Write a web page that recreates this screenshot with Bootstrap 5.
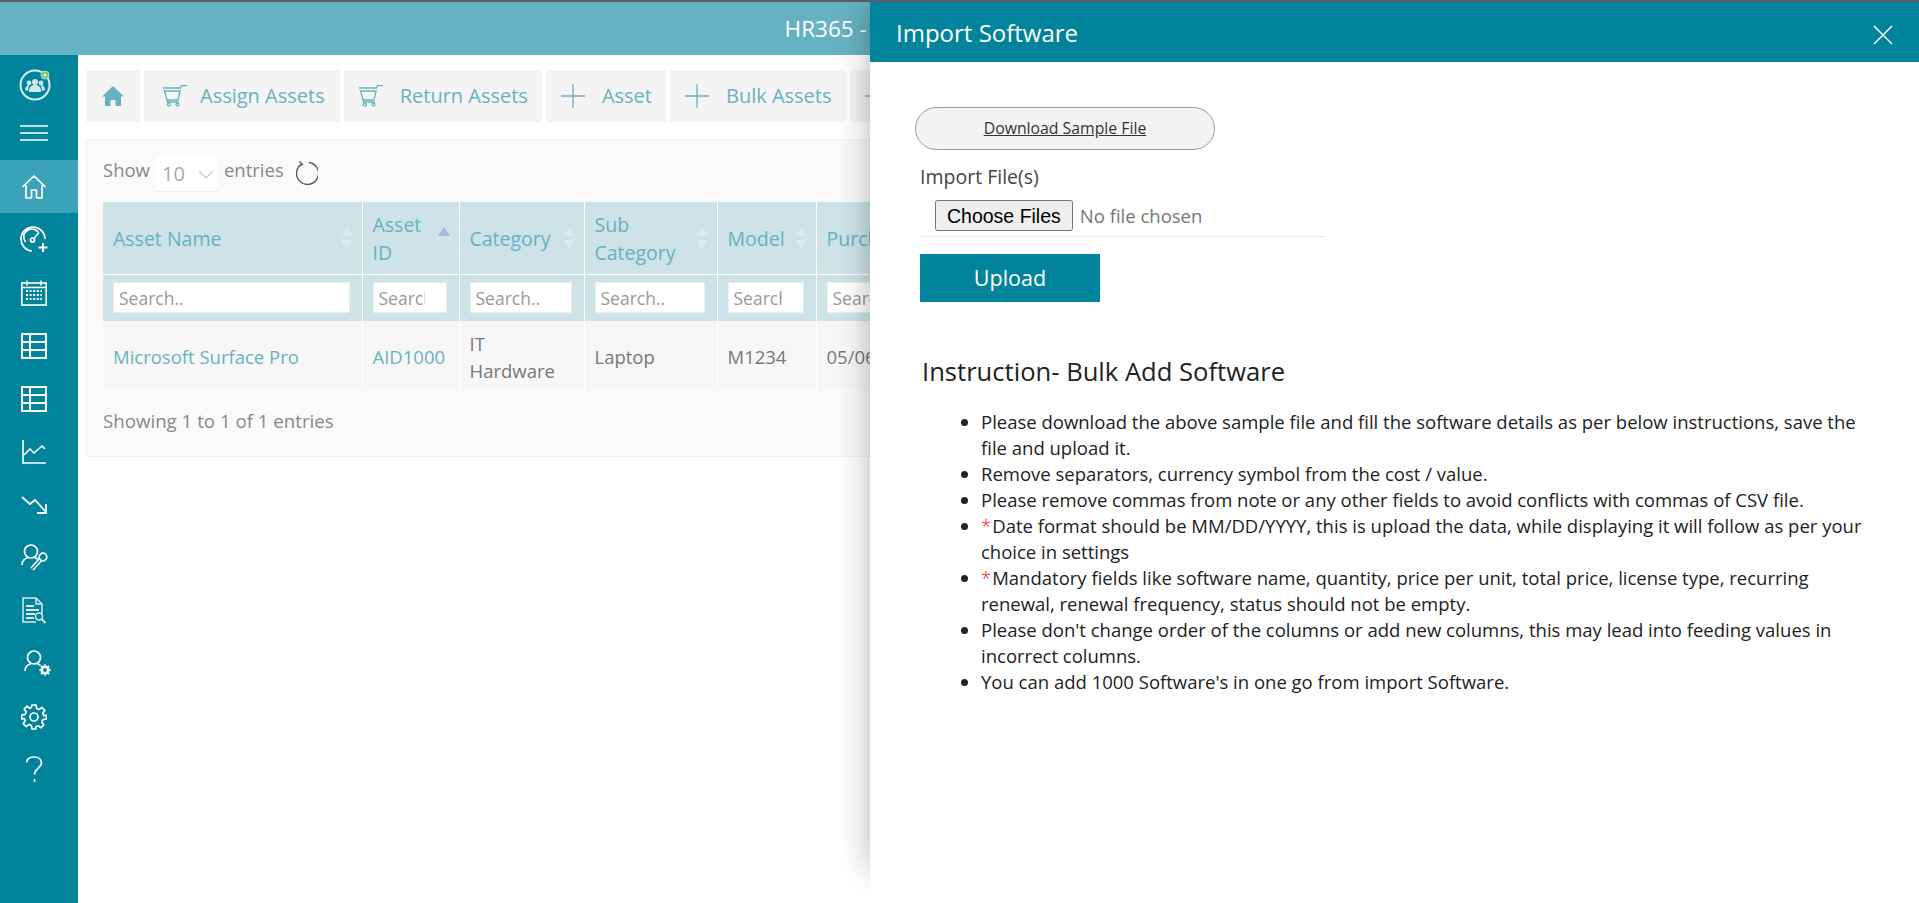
<!DOCTYPE html>
<html lang="en">
<head>
    <meta charset="UTF-8">
    <meta name="viewport" content="width=device-width, initial-scale=1.0">
    <title>HR365 - Import Software</title>
    <link href="https://cdn.jsdelivr.net/npm/bootstrap@5.3.0/dist/css/bootstrap.min.css" rel="stylesheet">
    <style>
        html, body { height: 100%; overflow: hidden; }
        body {
            font-family: "Open Sans", "Noto Sans", sans-serif;
            background: #fff;
            border-top: 2px solid #5a5f66;
            color: #666;
        }
        .app-header {
            height: 53px;
            background: #67b2c1;
            color: #fff;
            font-size: 22.5px;
            padding-right: 36px;
        }
        .app-shell { height: calc(100% - 53px); }
        .side-rail { width: 78px; background: #00839b; flex: none; }
        .rail-top { height: 105px; padding: 12px 10px 0 0; }
        .rail-logo { height: 34px; margin: 0 0 24px 4px; }
        .rail-item { height: 53px; color: #fff; padding-right: 10px; }
        .rail-item.is-active { background: #3ba3b8; }
        .rail-item svg, .rail-logo svg { display: block; }
        .main-pane { padding: 15px 0 0 8px; min-width: 0; overflow: hidden; }
        .tool-strip { gap: 4px; height: 52px; white-space: nowrap; }
        .tool-btn {
            background: #f4f4f4;
            color: #67b2c1;
            font-size: 20px;
            height: 52px;
            padding: 0 14px 0 15px;
            gap: 17px;
            flex: none;
        }
        .tool-btn.home-btn { width: 54px; padding: 0; justify-content: center; }
        .tool-btn.assign-btn { padding: 0 15px 0 19px; gap: 13px; }
        .list-card {
            width: 1820px;
            margin-top: 17px;
            height: 318px;
            background: #fafafa;
            border: 1px solid #f3f3f3;
            border-radius: 0;
            padding: 15px 16px;
            font-size: 18.5px;
        }
        .show-row { height: 36px; margin-bottom: 11px; gap: 6px; color: #888; }
        .show-word { margin-bottom: 6px; }
        .len-box {
            width: 62px; height: 35px;
            background: #fff;
            color: #aaa;
            font-size: 20px;
            padding: 2px 4px 0 6px;
            box-shadow: 0 1px 1px #eee;
        }
        .asset-table { table-layout: fixed; width: 900px; margin: 0; border-collapse: collapse; --bs-table-bg: transparent; }
        .asset-table th, .asset-table td { border: 0; border-right: 1px solid #fff; padding: 0 10px; vertical-align: middle; position: relative; }
        .asset-table thead th { background: #cde3e8; color: #67b2c1; font-weight: 400; font-size: 19.5px; line-height: 28px; }
        .asset-table .head-row { height: 72px; }
        .asset-table .head-row th { padding: 2px 22px 0 10px; }
        .asset-table .filter-row { height: 47px; }
        .asset-table .filter-row th { border-top: 1px solid #fff; padding-right: 12px; }
        .asset-table tbody td { background: #f7f7f7; height: 69px; font-size: 18.5px; line-height: 27px; color: #777; padding-top: 2px; }
        .asset-table a { color: #67b2c1; text-decoration: none; }
        .filter-input {
            width: 100%; height: 31px;
            border: 1px solid #eee; background: #fff;
            padding: 0 21px 0 5px; font-size: 17.5px; display: block;
        }
        .filter-input::placeholder { color: #999; }
        .sort-mark { position: absolute; right: 9px; top: 50%; margin-top: -11px; }
        .footer-note { margin-top: 17px; color: #888; font-size: 18.7px; }

        .import-drawer.offcanvas {
            --bs-offcanvas-width: 1049px;
            top: 2px;
            border: 0;
            color: #222;
        }
        .import-drawer::before {
            content: "";
            position: absolute;
            top: 0; left: 0; right: 0; bottom: 35px;
            box-shadow: 0 0 30px rgba(0,0,0,.3);
            clip-path: inset(-60px 100% -60px -60px);
        }
        .drawer-head { height: 60px; background: #00839b; color: #fff; padding: 2px 26px 0; }
        .drawer-head h5 { font-size: 24px; font-weight: 400; margin: 0; }
        .drawer-body { padding: 45px 47px 0 45px; }
        .sample-btn {
            width: 300px; height: 43px;
            margin-bottom: 14px;
            background: #f3f3f3;
            border: 1px solid #999;
            border-radius: 22px;
            color: #333;
            font-size: 15.8px;
            text-decoration: underline;
        }
        .import-block { margin-left: 5px; }
        .import-label { font-size: 19.5px; color: #444; margin-bottom: 10px; line-height: 26px; }
        .file-line { width: 406px; height: 37px; border-bottom: 1px solid #e5e5e5; padding-left: 15px; }
        .file-field { font-size: 18.5px; color: #777; width: 390px; }
        .file-field::file-selector-button {
            font-family: "Liberation Sans", Arial, sans-serif;
            font-size: 19.5px;
            height: 31px;
            padding: 0 10px;
            margin-right: 7px;
        }
        .upload-btn {
            width: 180px; height: 48px; margin-top: 17px; border: 0; border-radius: 0;
            background: #00839b; color: #fff; font-size: 21.5px;
        }
        .guide-title { font-size: 25.6px; font-weight: 400; margin: 53px 0 20px 7px; line-height: 34px; color: #222; }
        .guide-list { padding-left: 66px; margin: 0; font-size: 18.5px; line-height: 26px; color: #222; }
        .req-star { color: #f00; font-weight: 300; margin-right: 1px; }
    </style>
</head>
<body>
    <div class="app-header d-flex align-items-center justify-content-center">HR365 - IT Asset Management</div>

    <div class="app-shell d-flex">
        <nav class="side-rail d-flex flex-column">
            <div class="rail-top d-flex flex-column align-items-center">
                <div class="rail-logo">
                    <svg width="34" height="34" viewBox="0 0 34 34" fill="none">
                        <circle cx="16" cy="18" r="14.500" stroke="#d5eef2" stroke-width="2"/>
                        <circle cx="16" cy="15" r="3" fill="#cfe9ee"/><circle cx="10" cy="16" r="2.4" fill="#cfe9ee"/><circle cx="22" cy="16" r="2.4" fill="#cfe9ee"/>
                        <path d="M10 25c0-5 2-7 6-7s6 2 6 7z" fill="#cfe9ee"/><path d="M6 23c0-3 2-5 4-5l-1 6zM26 23c0-3-2-5-4-5l1 6z" fill="#cfe9ee"/>
                        <circle cx="26" cy="8" r="4" fill="#7cc27a" stroke="#b8e3b0"/><circle cx="26" cy="8" r="1.4" fill="#e8f7e6"/>
                    </svg>
                </div>
                <svg width="28" height="16" viewBox="0 0 28 16" stroke="#fff" stroke-width="1.6"><path d="M0 1h28M0 8h28M0 15h28"/></svg>
            </div>
            <div class="rail-item is-active d-flex align-items-center justify-content-center">
                <svg width="26" height="26" viewBox="0 0 26 26" fill="none" stroke="#fff" stroke-width="1.7" stroke-linejoin="round"><path d="M1.5 13 13 2l11.5 11M5 11v13h5.5v-8h5v8H21V11"/></svg>
            </div>
            <div class="rail-item d-flex align-items-center justify-content-center">
                <svg width="28" height="28" viewBox="0 0 28 28" fill="none" stroke="#fff" stroke-width="1.7"><path d="M12 25A12 12 0 1 1 25 13"/><path d="M5.5 16A8 8 0 0 1 18 6"/><circle cx="12.5" cy="14" r="2"/><path d="M14 12.5l5-6"/><path d="M23 17v9M18.500 21.500h9" stroke-width="2"/></svg>
            </div>
            <div class="rail-item d-flex align-items-center justify-content-center">
                <svg width="26" height="26" viewBox="0 0 26 26" fill="none" stroke="#fff"><rect x=".8" y="3" width="24.4" height="22" stroke-width="1.6"/><path d="M1 7.500h24M6 .5v5M20 .5v5" stroke-width="1.6"/><path d="M5 11h16M5 15h16M5 19h16" stroke-width="2" stroke-dasharray="2 1.600"/></svg>
            </div>
            <div class="rail-item d-flex align-items-center justify-content-center">
                <svg width="26" height="26" viewBox="0 0 26 26" fill="none" stroke="#fff" stroke-width="2"><rect x="1" y="1" width="24" height="24"/><path d="M1 9h24M1 17h24M9 1v24"/></svg>
            </div>
            <div class="rail-item d-flex align-items-center justify-content-center">
                <svg width="26" height="26" viewBox="0 0 26 26" fill="none" stroke="#fff" stroke-width="2"><rect x="1" y="1" width="24" height="24"/><path d="M1 9h24M1 17h24M9 1v24"/></svg>
            </div>
            <div class="rail-item d-flex align-items-center justify-content-center">
                <svg width="26" height="26" viewBox="0 0 26 26" fill="none" stroke="#fff" stroke-width="1.6"><path d="M2 1v23h23"/><path d="M3 16l6-6 4 4 8-7 3 3"/></svg>
            </div>
            <div class="rail-item d-flex align-items-center justify-content-center">
                <svg width="26" height="20" viewBox="0 0 26 20" fill="none" stroke="#fff" stroke-width="1.8"><path d="M1 2l8 7 5-4 11 12"/><path d="M25 9v9H16"/></svg>
            </div>
            <div class="rail-item d-flex align-items-center justify-content-center">
                <svg width="27" height="27" viewBox="0 0 27 27" fill="none" stroke="#fff" stroke-width="1.7"><circle cx="10" cy="7.500" r="6.500"/><path d="M1 21c0-4 3-7 6.500-7.500M13.500 13.500c1.300.3 2.500 1 3.500 2"/><path d="M11 25l10-11" stroke-width="4.500"/><path d="M11 25l10-11" stroke="#00839b" stroke-width="1.600"/><circle cx="22" cy="13" r="3.800" fill="#00839b"/></svg>
            </div>
            <div class="rail-item d-flex align-items-center justify-content-center">
                <svg width="26" height="27" viewBox="0 0 26 27" fill="none" stroke="#d9e9ec" stroke-width="1.500"><path d="M21 17V7l-6-6H2v24h13"/><path d="M15 1v6h6"/><path d="M5 9h8M5 13h13M5 17h9M5 21h8" stroke-width="1.800"/><circle cx="18" cy="19.500" r="3.500"/><path d="M20.500 22l4 4" stroke-width="2"/></svg>
            </div>
            <div class="rail-item d-flex align-items-center justify-content-center">
                <svg width="28" height="27" viewBox="0 0 28 27" fill="none" stroke="#fff" stroke-width="1.700" class="ms-2"><circle cx="10" cy="7.500" r="6.500"/><path d="M1 21c0-4 3-7 6.500-7.500M12.500 13.500c1.500.3 3 1 4 2"/><circle cx="21" cy="20" r="3.200" stroke-width="2.600"/><path d="M21 14.500v2M21 23.500v2M15.500 20h2M24.500 20h2M17 16l1.500 1.500M23.500 22.500 25 24M25 16l-1.500 1.500M18.500 22.500 17 24" stroke-width="2"/></svg>
            </div>
            <div class="rail-item d-flex align-items-center justify-content-center">
                <svg width="26" height="26" viewBox="0 0 26 26" fill="none" stroke="#fff" stroke-width="1.700" stroke-linejoin="round"><circle cx="13" cy="13" r="4"/><path d="M11 1h4l.7 3.500 2.300 1 3-2 2.800 2.800-2 3 1 2.300L25.500 11v4l-3.700.7-1 2.300 2 3-2.800 2.800-3-2-2.300 1L15 25h-4l-.7-3.500-2.300-1-3 2-2.800-2.800 2-3-1-2.300L.5 15v-4l3.700-.7 1-2.300-2-3L6 2.200l3 2 1.300-.7z"/></svg>
            </div>
            <div class="rail-item d-flex align-items-center justify-content-center">
                <svg width="18" height="27" viewBox="0 0 18 27" fill="none" stroke="#fff" stroke-width="1.700"><path d="M1.500 6.500C2 3 5 1 9 1c4.500 0 7.500 2.500 7.500 6 0 5-7 5.500-7 11.500"/><path d="M9.500 23v3"/></svg>
            </div>
        </nav>

        <main class="main-pane flex-grow-1">
            <div class="tool-strip d-flex">
                <div class="tool-btn home-btn d-flex align-items-center">
                    <svg width="22" height="22" viewBox="0 0 22 22" fill="#67b2c1"><path d="M11 1 0 11.500h3V21h5.500v-6h5v6H19v-9.500h3z"/></svg>
                </div>
                <div class="tool-btn assign-btn d-flex align-items-center">
                    <svg width="24" height="22" viewBox="0 0 24 22" fill="none" stroke="#67b2c1" stroke-width="1.300"><path d="M0 3h17.500l1-2.400H24M1.500 6h15.700l-2.200 9H4z"/><path d="M4 15l.5 2h11"/><circle cx="6" cy="19.500" r="1.500"/><circle cx="14.500" cy="19.500" r="1.500"/></svg>
                    Assign Assets
                </div>
                <div class="tool-btn d-flex align-items-center">
                    <svg width="24" height="22" viewBox="0 0 24 22" fill="none" stroke="#67b2c1" stroke-width="1.300"><path d="M0 3h17.500l1-2.400H24M1.500 6h15.700l-2.200 9H4z"/><path d="M4 15l.5 2h11"/><circle cx="6" cy="19.500" r="1.500"/><circle cx="14.500" cy="19.500" r="1.500"/></svg>
                    Return Assets
                </div>
                <div class="tool-btn d-flex align-items-center">
                    <svg width="24" height="24" viewBox="0 0 24 24" stroke="#67b2c1" stroke-width="1.300"><path d="M12 0v24M0 12h24"/></svg>
                    Asset
                </div>
                <div class="tool-btn d-flex align-items-center">
                    <svg width="24" height="24" viewBox="0 0 24 24" stroke="#67b2c1" stroke-width="1.300"><path d="M12 0v24M0 12h24"/></svg>
                    Bulk Assets
                </div>
                <div class="tool-btn d-flex align-items-center">
                    <svg width="24" height="24" viewBox="0 0 24 24" stroke="#67b2c1" stroke-width="1.300"><path d="M12 0v24M0 12h24"/></svg>
                    Import
                </div>
            </div>

            <div class="card list-card">
                <div class="show-row d-flex align-items-center">
                    <span class="show-word">Show</span>
                    <div class="len-box d-flex align-items-center justify-content-between">
                        <span>10</span>
                        <svg width="16" height="9" viewBox="0 0 16 9" fill="none" stroke="#ccc" stroke-width="1.300"><path d="M1 1l7 7 7-7"/></svg>
                    </div>
                    <span class="show-word">entries</span>
                    <svg class="ms-1" width="24" height="24" viewBox="0 0 24 24" fill="none" stroke="#555" stroke-width="1.300"><path d="M7.500 3.200A11 11 0 1 0 15 1.500"/><path d="M5.500 .5l3 3-3.500 1.500"/></svg>
                </div>
                <table class="table asset-table">
                    <colgroup><col style="width:259px"><col style="width:97px"><col style="width:125px"><col style="width:133px"><col style="width:99px"><col style="width:187px"></colgroup>
                    <thead>
                        <tr class="head-row">
                            <th>Asset Name<svg class="sort-mark" width="12" height="22" viewBox="0 0 12 22" fill="#dde9ec"><path d="M6 0l6 9H0zM6 22l6-9H0z"/></svg></th>
                            <th>Asset ID<svg class="sort-mark" width="12" height="22" viewBox="0 0 12 22"><path d="M6 0l6 9H0z" fill="#b3b1e8"/></svg></th>
                            <th>Category<svg class="sort-mark" width="12" height="22" viewBox="0 0 12 22" fill="#dde9ec"><path d="M6 0l6 9H0zM6 22l6-9H0z"/></svg></th>
                            <th>Sub Category<svg class="sort-mark" width="12" height="22" viewBox="0 0 12 22" fill="#dde9ec"><path d="M6 0l6 9H0zM6 22l6-9H0z"/></svg></th>
                            <th>Model<svg class="sort-mark" width="12" height="22" viewBox="0 0 12 22" fill="#dde9ec"><path d="M6 0l6 9H0zM6 22l6-9H0z"/></svg></th>
                            <th>Purchase Date</th>
                        </tr>
                        <tr class="filter-row">
                            <th><input class="filter-input" placeholder="Search.."></th>
                            <th><input class="filter-input" placeholder="Search.."></th>
                            <th><input class="filter-input" placeholder="Search.."></th>
                            <th><input class="filter-input" placeholder="Search.."></th>
                            <th><input class="filter-input" placeholder="Search.."></th>
                            <th><input class="filter-input" placeholder="Search.."></th>
                        </tr>
                    </thead>
                    <tbody>
                        <tr>
                            <td><a href="#">Microsoft Surface Pro</a></td>
                            <td><a href="#">AID1000</a></td>
                            <td>IT<br>Hardware</td>
                            <td>Laptop</td>
                            <td>M1234</td>
                            <td>05/06/2023</td>
                        </tr>
                    </tbody>
                </table>
                <div class="footer-note">Showing 1 to 1 of 1 entries</div>
            </div>
        </main>
    </div>

    <div class="offcanvas offcanvas-end show import-drawer" data-bs-backdrop="false" data-bs-scroll="true" tabindex="-1">
        <div class="drawer-head d-flex align-items-center justify-content-between">
            <h5>Import Software</h5>
            <svg width="20" height="20" viewBox="0 0 20 20" stroke="#fff" stroke-width="1.500" class="mt-1"><path d="M1 1l18 18M19 1 1 19"/></svg>
        </div>
        <div class="drawer-body">
            <button class="sample-btn d-block" type="button">Download Sample File</button>
            <div class="import-block">
                <div class="import-label">Import File(s)</div>
                <div class="file-line"><input class="file-field" type="file" multiple></div>
                <button class="upload-btn d-block" type="button">Upload</button>
            </div>
            <h4 class="guide-title">Instruction- Bulk Add Software</h4>
            <ul class="guide-list">
                <li>Please download the above sample file and fill the software details as per below instructions, save the file and upload it.</li>
                <li>Remove separators, currency symbol from the cost / value.</li>
                <li>Please remove commas from note or any other fields to avoid conflicts with commas of CSV file.</li>
                <li><span class="req-star">*</span>Date format should be MM/DD/YYYY, this is upload the data, while displaying it will follow as per your choice in settings</li>
                <li><span class="req-star">*</span>Mandatory fields like software name, quantity, price per unit, total price, license type, recurring renewal, renewal frequency, status should not be empty.</li>
                <li>Please don't change order of the columns or add new columns, this may lead into feeding values in incorrect columns.</li>
                <li>You can add 1000 Software's in one go from import Software.</li>
            </ul>
        </div>
    </div>

    <script src="https://cdn.jsdelivr.net/npm/bootstrap@5.3.0/dist/js/bootstrap.bundle.min.js"></script>
</body>
</html>
